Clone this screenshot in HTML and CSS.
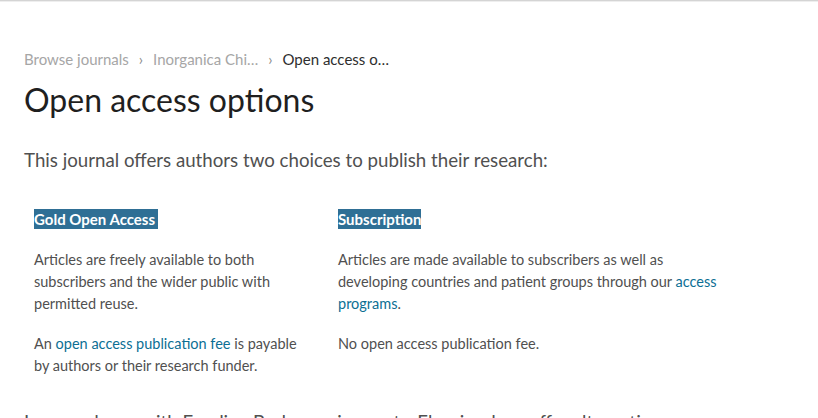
FILE: index.html
```html
<!DOCTYPE html>
<html lang="en">
<head>
<meta charset="utf-8">
<title>Open access options</title>
<link rel="stylesheet" href="styles.css">
</head>
<body>
<div class="topbar"></div>
<main class="page">
  <nav class="crumbs">
    <a class="crumb" href="#">Browse journals</a>
    <span class="sep">&#8250;</span>
    <a class="crumb" href="#">Inorganica Chi…</a>
    <span class="sep">&#8250;</span>
    <span class="crumb current">Open access o…</span>
  </nav>
  <h1 class="title">Open access options</h1>
  <p class="intro">This journal offers authors two choices to publish their research:</p>
  <div class="options">
    <section class="option option-gold">
      <h2 class="tag">Gold Open Access</h2>
      <p class="text">Articles are freely available to both subscribers and the wider public with permitted reuse.</p>
      <p class="text">An <a href="#" class="link">open access publication fee</a> is payable by authors or their research funder.</p>
    </section>
    <section class="option option-sub">
      <h2 class="tag">Subscription</h2>
      <p class="text">Articles are made available to subscribers as well as developing countries and patient groups through our <a href="#" class="link">access programs</a>.</p>
      <p class="text">No open access publication fee.</p>
    </section>
  </div>
  <p class="intro more">In accordance with Funding Body requirements, Elsevier does offer alternative open access publishing options.</p>
</main>
</body>
</html>
```
FILE: styles.css
```css
html, body {
  margin: 0;
  padding: 0;
  background: #fff;
}
body {
  font-family: Lato, "Open Sans", sans-serif;
  color: #505050;
}
.topbar {
  height: 1px;
  background: #d4d4d4;
  border-bottom: 1px solid #eeeeee;
}
.page {
  padding: 46px 24px 0 24px;
}
.crumbs {
  display: flex;
  align-items: center;
  gap: 10px;
  font-size: 15px;
  line-height: 22px;
  height: 22px;
}
.crumb {
  color: #a6a6a6;
  text-decoration: none;
}
.crumb.current {
  color: #2e2e2e;
}
.sep {
  color: #8a8a8a;
  font-size: 15px;
}
.title {
  margin: 8px 0 0 0;
  font-size: 32px;
  line-height: 44px;
  font-weight: 400;
  color: #1f1f1f;
}
.intro {
  margin: 25px 0 0 0;
  font-size: 18.7px;
  line-height: 26px;
  color: #505050;
  white-space: nowrap;
}
.options {
  display: flex;
  margin-top: 36px;
  padding-left: 10px;
}
.option-gold {
  width: 304px;
}
.option-sub {
  width: 400px;
}
.tag {
  display: inline-block;
  margin: 0;
  background: #2f6f95;
  color: #fff;
  font-size: 15px;
  line-height: 20px;
  font-weight: 700;
  padding: 0;
}
.option-gold .tag { padding-right: 3px; }
.text {
  margin: 20px 0 0 0;
  font-size: 14.5px;
  line-height: 22px;
  color: #505050;
  max-width: 272px;
}
.text + .text {
  margin-top: 18px;
}
.option-sub .text {
  max-width: 396px;
}
.link {
  color: #0c6f94;
  text-decoration: none;
}
.more {
  margin-top: 32px;
  white-space: normal;
}
```
